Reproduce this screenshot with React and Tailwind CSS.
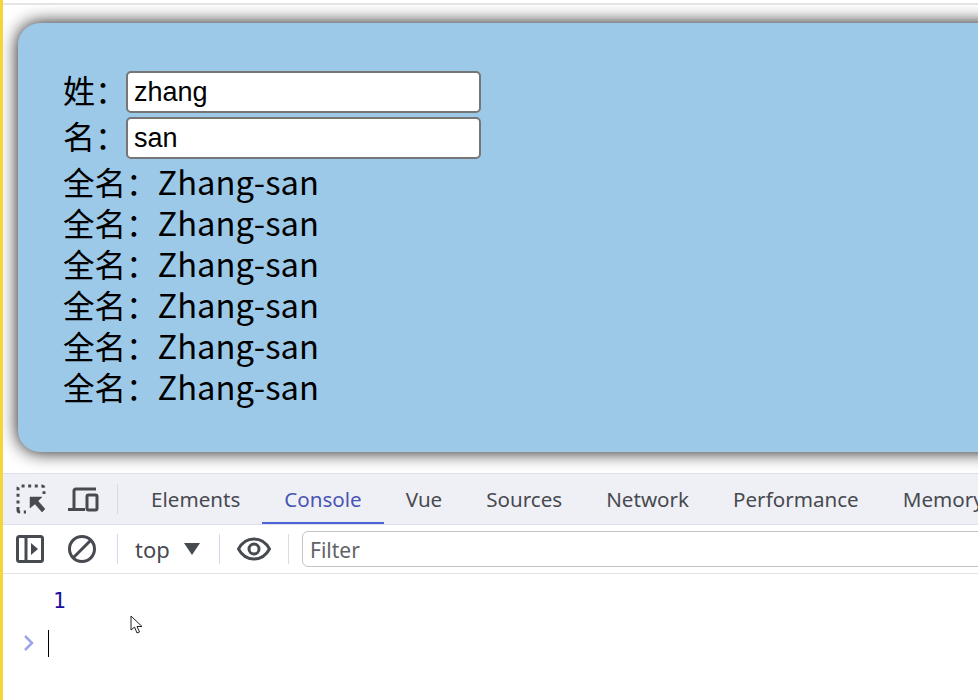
import React from 'react';

const cn = { fontFamily: '"Noto Sans CJK SC", "Noto Sans", sans-serif' };
const ui = { fontFamily: '"Noto Sans", "Open Sans", sans-serif' };

const tabs = [
  { label: 'Elements' },
  { label: 'Console', active: true },
  { label: 'Vue' },
  { label: 'Sources' },
  { label: 'Network' },
  { label: 'Performance' },
  { label: 'Memory' },
];

const NameField = ({ label, value }) => (
  <div className="flex items-center h-[46px]">
    <span className="w-[63px] -mt-[7px] text-[32px] leading-[46px] text-black" style={cn}>{label}：</span>
    <input
      readOnly
      value={value}
      className="w-[355px] h-[42px] px-[6px] bg-white border-2 border-[#767676] rounded-[5px] text-[27px] text-black outline-none"
      style={{ fontFamily: '"Liberation Sans", sans-serif' }}
    />
  </div>
);

const InspectIcon = () => (
  <svg width="30" height="30" viewBox="0 0 30 30" fill="none" stroke="#474a50">
    <path d="M2 26V4a2 2 0 0 1 2-2h22a2 2 0 0 1 2 2v6M2 26a2 2 0 0 0 2 2h6" strokeWidth="3" strokeDasharray="3 3.6" />
    <path d="M14 13h12l-4 4 7 8-3 3-7-8-5 4z" fill="#474a50" strokeWidth="0.5" />
  </svg>
);

const DeviceIcon = () => (
  <svg width="32" height="26" viewBox="0 0 32 26" fill="none" stroke="#474a50" strokeWidth="3">
    <path d="M29 3H9a2 2 0 0 0-2 2v17" />
    <path d="M1 23.5h17" />
    <rect x="20" y="9" width="10" height="15" rx="1.5" />
  </svg>
);

const SidebarIcon = () => (
  <svg width="28" height="28" viewBox="0 0 28 28" fill="none">
    <rect x="1.5" y="1.5" width="25" height="25" rx="2" stroke="#474a50" strokeWidth="3" />
    <path d="M10 2v24" stroke="#474a50" strokeWidth="3" />
    <path d="M15 8l7 6-7 6z" fill="#474a50" />
  </svg>
);

const ClearIcon = () => (
  <svg width="30" height="30" viewBox="0 0 30 30" fill="none" stroke="#474a50" strokeWidth="3">
    <circle cx="15" cy="15" r="12.5" />
    <path d="M6.5 23.5l17-17" />
  </svg>
);

const EyeIcon = () => (
  <svg width="34" height="24" viewBox="0 0 34 24" fill="none" stroke="#474a50" strokeWidth="3">
    <path d="M1.5 12C5 5.500 10.500 2 17 2s12 3.500 15.500 10C29 18.500 23.500 22 17 22S5 18.500 1.500 12z" />
    <circle cx="17" cy="12" r="5" />
  </svg>
);

export default function App() {
  return (
    <div className="w-[978px] h-[700px] overflow-hidden bg-white border-l-[3px] border-[#f5d53c] flex flex-col">
      <div className="h-[473px] shrink-0 overflow-hidden pt-[3px] bg-white">
        <div className="h-[470px] border-t-2 border-t-[#e6e6e6] pl-[15px] pt-[18px]">
          <div className="w-[1100px] h-[429px] pl-[45px] pt-[46px] bg-[#9dc9e9] rounded-[22px] shadow-[0_0_18px_#111]">
            <NameField label="姓" value="zhang" />
            <NameField label="名" value="san" />
            <div className="-mt-[1px]">
              {[0, 1, 2, 3, 4, 5].map((i) => (
                <div key={i} className="h-[41px] leading-[41px] text-black whitespace-nowrap" style={cn}>
                  <span className="text-[31.5px]">全名：</span>
                  <span className="text-[32.7px]">Zhang-san</span>
                </div>
              ))}
            </div>
          </div>
        </div>
      </div>

      <div className="h-[52px] shrink-0 flex items-center bg-[#eff0f6] border-t border-b border-[#dcdfee]" style={ui}>
        <div className="flex items-center w-[114px] shrink-0 pl-[13px] gap-[21px]">
          <InspectIcon />
          <DeviceIcon />
        </div>
        <div className="w-px h-[30px] bg-[#d4d9ef] shrink-0" />
        <div className="flex h-full ml-[11px]">
          {tabs.map((t) => (
            <div
              key={t.label}
              className={`h-full flex items-center px-[22px] pt-[2px] text-[20.6px] whitespace-nowrap border-b-2 ${t.active ? 'text-[#4a55b5] border-[#4c62d6]' : 'text-[#474a50] border-transparent'}`}
            >
              {t.label}
            </div>
          ))}
        </div>
      </div>

      <div className="h-[49px] shrink-0 flex items-center bg-white border-b border-[#e3e3e3]" style={ui}>
        <div className="flex items-center w-[114px] shrink-0 pl-[13px] gap-[23px]">
          <SidebarIcon />
          <ClearIcon />
        </div>
        <div className="w-px h-[30px] bg-[#d4d9ef] shrink-0" />
        <div className="flex items-center w-[101px] shrink-0 pl-[17px] text-[22px] text-[#474a50]">
          top
          <span className="ml-[14px] w-0 h-0 border-x-[8px] border-x-transparent border-t-[12px] border-t-[#474a50]" />
        </div>
        <div className="w-px h-[30px] bg-[#d4d9ef] shrink-0" />
        <div className="w-[68px] shrink-0 flex justify-center"><EyeIcon /></div>
        <div className="w-px h-[30px] bg-[#dcdcdc] shrink-0" />
        <div className="ml-[13px] w-[800px] shrink-0 h-[36px] flex items-center pl-[7px] pt-[3px] border border-[#c4c4c4] rounded-[6px] text-[21px] text-[#5f6368]">
          Filter
        </div>
      </div>

      <div className="relative flex-1 bg-white">
        <div className="pl-[50px] pt-[12px] h-[43px] text-[21px] leading-[30px] text-[#1a0f9c]" style={{ fontFamily: '"DejaVu Sans Mono", monospace' }}>1</div>
        <div className="flex items-center pl-[20px] h-[44px] mt-[4px]">
          <svg width="12" height="18" viewBox="0 0 12 18" fill="none" stroke="#9aa5ee" strokeWidth="2.500"><path d="M2 2l7 7-7 7" /></svg>
          <div className="ml-[13px] w-[1px] h-[27px] bg-black" />
        </div>
        {/* mouse pointer left in the capture */}
        <svg className="absolute left-[127px] top-[41px]" width="14" height="20" viewBox="0 0 14 20" fill="white" stroke="#222" strokeWidth="1">
          <path d="M1 1v14l3.500-3 2.500 6 2.500-1-2.500-5.500H12z" />
        </svg>
      </div>
    </div>
  );
}
